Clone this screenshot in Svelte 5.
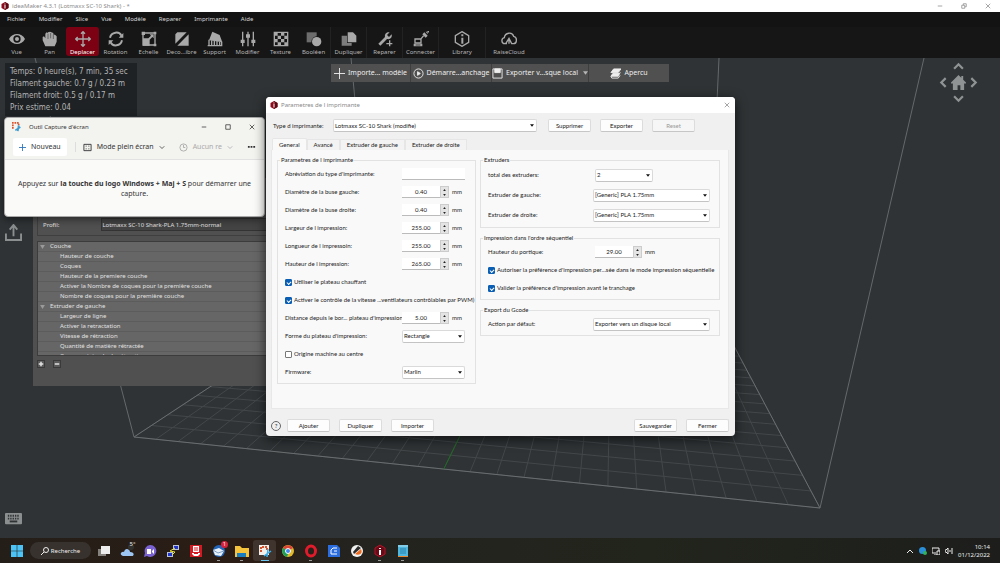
<script>
  const menus = ['Fichier', 'Modifier', 'Slice', 'Vue', 'Modèle', 'Reparer', 'Imprimante', 'Aide'];

  const tools = [
    { label: 'Vue', icon: 'eye' },
    { label: 'Pan', icon: 'hand' },
    { label: 'Deplacer', icon: 'move' },
    { label: 'Rotation', icon: 'rotate' },
    { label: 'Echelle', icon: 'scale' },
    { label: 'Deco...ibre', icon: 'cut' },
    { label: 'Support', icon: 'support' },
    { label: 'Modifier', icon: 'sliders' },
    { label: 'Texture', icon: 'texture' },
    { label: 'Booléen', icon: 'boolean' },
    { label: 'Dupliquer', icon: 'copy', size: 'mid' },
    { label: 'Reparer', icon: 'wrench', size: 'mid' },
    { label: 'Connecter', icon: 'connect', size: 'mid' },
    { label: 'Library', icon: 'library', size: 'wide' },
    { label: 'RaiseCloud', icon: 'cloud', size: 'wide' }
  ];
  let activeTool = $state('Deplacer');

  const stats = [
    'Temps: 0 heure(s), 7 min, 35 sec',
    'Filament gauche: 0.7 g / 0.23 m',
    'Filament droit: 0.5 g / 0.17 m',
    'Prix estime: 0.04'
  ];

  const settings = [
    {
      name: 'Couche',
      items: [
        'Hauteur de couche',
        'Coques',
        'Hauteur de la premiere couche',
        'Activer la Nombre de coques pour la première couche',
        'Nombre de coques pour la première couche'
      ]
    },
    {
      name: 'Extruder de gauche',
      items: [
        'Largeur de ligne',
        'Activer la retractation',
        'Vitesse de rétraction',
        'Quantité de matière rétractée',
        'Course minimale de rétraction'
      ]
    }
  ];

  const tabs = ['General', 'Avancé', 'Extruder de gauche', 'Extruder de droite'];
  let activeTab = $state('General');

  const fields = [
    { id: 'abbr', type: 'text', label: 'Abréviation du type d\'imprimante:', value: '' },
    { id: 'nozzle-left', type: 'spin', label: 'Diamètre de la buse gauche:', value: '0.40' },
    { id: 'nozzle-right', type: 'spin', label: 'Diamètre de la buse droite:', value: '0.40' },
    { id: 'width', type: 'spin', label: 'Largeur de l impression:', value: '255.00' },
    { id: 'length', type: 'spin', label: 'Longueur de l impressoin:', value: '255.00' },
    { id: 'height', type: 'spin', label: 'Hauteur de l impression:', value: '265.00' },
    { id: 'heated', type: 'check', label: 'Utiliser le plateau chauffant', value: true },
    { id: 'fan', type: 'check', label: 'Activer le contrôle de la vitesse ...ventilateurs contrôlables par PWM)', value: true },
    { id: 'edge', type: 'spin', label: 'Distance depuis le bor... plateau d\'impression:', value: '5.00' },
    { id: 'shape', type: 'select', label: 'Forme du plateau d\'impression:', value: 'Rectangle' },
    { id: 'origin', type: 'check', label: 'Origine machine au centre', value: false },
    { id: 'firmware', type: 'select', label: 'Firmware:', value: 'Marlin' }
  ];

  const extruders = [
    { id: 'total', type: 'select', label: 'total des extruders:', value: '2' },
    { id: 'ext-left', type: 'select', label: 'Extruder de gauche:', value: '[Generic] PLA 1.75mm', wide: true },
    { id: 'ext-right', type: 'select', label: 'Extruder de droite:', value: '[Generic] PLA 1.75mm', wide: true }
  ];
  const sequential = [
    { id: 'gantry', type: 'spin', label: 'Hauteur du portique:', value: '29.00' },
    { id: 'allow', type: 'check', label: 'Autoriser la préférence d\'impression per...sée dans le mode impression séquentielle', value: true },
    { id: 'validate', type: 'check', label: 'Valider la préférence d\'impression avant le tranchage', value: true }
  ];
  const gcode = [
    { id: 'action', type: 'select', label: 'Action par défaut:', value: 'Exporter vers un disque local', wide: true }
  ];

  const apps = [
    { name: 'taskview' },
    { name: 'weather' },
    { name: 'chat' },
    { name: 'putty' },
    { name: 'reader' },
    { name: 'mail', running: true },
    { name: 'files', running: true },
    { name: 'snip', running: true, active: true },
    { name: 'chrome' },
    { name: 'opera', running: true },
    { name: 'cura' },
    { name: 'prusa' },
    { name: 'ideamaker', running: true },
    { name: 'notepad', running: true }
  ];

  // Build plate corners in the scene: front left, front right, back right, back left
  const plate = [[134, 379], [820, 450], [708, 239], [372, 222]];
  const cells = 26;

  function project(u, v) {
    const [[x0, y0], [x1, y1], [x2, y2], [x3, y3]] = plate;
    const sx = x0 - x1 + x2 - x3;
    const sy = y0 - y1 + y2 - y3;
    const dx1 = x1 - x2;
    const dx2 = x3 - x2;
    const dy1 = y1 - y2;
    const dy2 = y3 - y2;
    const det = dx1 * dy2 - dx2 * dy1;
    const g = (sx * dy2 - dx2 * sy) / det;
    const h = (dx1 * sy - sx * dy1) / det;
    const w = g * u + h * v + 1;
    return [
      ((x1 - x0 + g * x1) * u + (x3 - x0 + h * x3) * v + x0) / w,
      ((y1 - y0 + g * y1) * u + (y3 - y0 + h * y3) * v + y0) / w
    ];
  }

  function line(u0, v0, u1, v1) {
    return `M${project(u0, v0).join(' ')}L${project(u1, v1).join(' ')}`;
  }

  let gridPath = '';
  for (let i = 0; i <= cells; i++) {
    gridPath += line(i / cells, 0, i / cells, 1) + line(0, i / cells, 1, i / cells);
  }
  const outline = line(0, 0, 1, 0) + line(1, 0, 1, 1) + line(1, 1, 0, 1) + line(0, 1, 0, 0);
  const axis = line(0.5, 0, 0.5, 0.25);
</script>

{#snippet logo()}
  <svg class="logo" viewBox="0 0 16 16" aria-hidden="true">
    <path d="M8 0l7 4v8l-7 4-7-4V4z" fill="#8e0a1c" />
    <path d="M8 0l7 4v8l-7 4z" fill="#5c0712" />
    <path d="M7 3h2v2H7zM7 6h2v7H7z" fill="#fff" />
  </svg>
{/snippet}

{#snippet field(f)}
  <div class="row">
    {#if f.type === 'check'}
      <label class="check">
        <input type="checkbox" bind:checked={f.value} />
        <span>{f.label}</span>
      </label>
    {:else}
      <label class="name" for={f.id}>{f.label}</label>
      <div class="control">
        {#if f.type === 'text'}
          <input id={f.id} class="text" type="text" value={f.value} />
        {:else if f.type === 'spin'}
          <input id={f.id} class="number" type="text" value={f.value} />
          <span class="steps">
            <button aria-label="Plus"><svg viewBox="0 0 4 3"><path d="M0 3l2-3 2 3z" /></svg></button>
            <button aria-label="Moins"><svg viewBox="0 0 4 3"><path d="M0 0l2 3 2-3z" /></svg></button>
          </span>
          <span class="unit">mm</span>
        {:else}
          <span class="drop" class:wide={f.wide} class:short={f.id === 'total'}>
            <select id={f.id}><option>{f.value}</option></select>
            <svg viewBox="0 0 6 4"><path d="M0 0h6L3 4z" /></svg>
          </span>
        {/if}
      </div>
    {/if}
  </div>
{/snippet}

<div class="desktop">
  <header class="titlebar">
    {@render logo()}
    <span class="title">ideaMaker 4.3.1 (Lotmaxx SC-10 Shark) - *</span>
    <div class="window-buttons">
      <button aria-label="Réduire"><svg viewBox="0 0 8 8"><path d="M1 4h6" /></svg></button>
      <button aria-label="Restaurer"><svg viewBox="0 0 8 8"><path d="M1 3h4v4H1zM3 3V1h4v4H5" /></svg></button>
      <button aria-label="Fermer"><svg viewBox="0 0 8 8"><path d="M1 1l6 6M7 1L1 7" /></svg></button>
    </div>
  </header>

  <nav class="menubar">
    {#each menus as menu}
      <button>{menu}</button>
    {/each}
  </nav>

  <div class="toolbar">
    {#each tools as tool}
      <button class="tool {tool.size ?? ''}" class:active={tool.label === activeTool} onclick={() => (activeTool = tool.label)}>
        <svg viewBox="0 0 24 24" aria-hidden="true">
          {#if tool.icon === 'eye'}
            <path class="fill" d="M0 12c5-10 19-10 24 0-5 10-19 10-24 0z" />
            <circle cx="12" cy="12" r="5.5" fill="#161616" />
            <circle class="fill" cx="12" cy="12" r="3" />
          {:else if tool.icon === 'hand'}
            <path class="fill" d="M5 23L1 14V9l2-1 2 3V4l2-2 2 1V2l3-1 2 1 3 1v2l3 1 2 2v8l-3 7z" />
            <path d="M9 4v8M13 3v8M17 5v7" stroke="#161616" stroke-width="0.7" />
          {:else if tool.icon === 'move'}
            <path class="stroke" d="M12 2v20M2 12h20M9 4l3-3 3 3M9 20l3 3 3-3M4 9l-3 3 3 3M20 9l3 3-3 3" />
          {:else if tool.icon === 'rotate'}
            <path class="stroke bold" d="M3 10c2-9 14-10 17-3M21 14c-2 9-14 10-17 3" />
            <path class="fill" d="M23 3v7h-7zM1 21v-7h7z" />
          {:else if tool.icon === 'scale'}
            <path class="stroke" d="M3 3h18v18H3z" />
            <path class="fill" d="M3 11h10v11H3zM13 5h6v6l-2-2-4 4-2-2 4-4z" />
            <path class="fill" d="M1 1h5v5H1zM19 1h4v4h-4zM19 19h4v4h-4z" />
          {:else if tool.icon === 'cut'}
            <path class="fill" d="M5 2h14L2 19V5zM22 5v17H5z" />
            <path d="M2 22L22 2" stroke="#161616" stroke-width="1" />
          {:else if tool.icon === 'support'}
            <path class="fill" d="M8 1l11 5 4 11-20-3z" />
            <path class="stroke" d="M3 13v9M7 14v8M11 15v7M15 15v7M19 16v6M22 16v6M1 22h22" />
          {:else if tool.icon === 'sliders'}
            <path class="stroke" d="M4 1v22M12 1v22M20 1v22" />
            <path class="fill" d="M1 13h6v5H1zM9 5h6v5H9zM17 13h6v5h-6z" />
          {:else if tool.icon === 'texture'}
            <path class="stroke" d="M2 2h20v20H2z" />
            <path class="fill" d="M2 2h5v5H2zM12 2h5v5h-5zM7 7h5v5H7zM17 7h5v5h-5zM2 12h5v5H2zM12 12h5v5h-5zM7 17h5v5H7zM17 17h5v5h-5z" />
          {:else if tool.icon === 'boolean'}
            <path class="fill" d="M1 2h15v15H1z" opacity="0.6" />
            <circle cx="16" cy="16" r="8" fill="#161616" />
            <circle class="fill" cx="16" cy="16" r="7" />
          {:else if tool.icon === 'copy'}
            <path class="fill" d="M1 7h8v11h7v4H1z" opacity="0.7" />
            <path class="fill" d="M10 2h8l5 5v10H10z" />
          {:else if tool.icon === 'wrench'}
            <path class="fill" d="M2 19L12 9c-1-5 3-8 7-7l-4 4 3 3 4-4c1 5-2 8-7 7L5 22z" />
            <path class="stroke" d="M19 14v9M14 19h9" />
          {:else if tool.icon === 'connect'}
            <path class="stroke" d="M3 12h9v6H3zM11 13l5-6" />
            <path class="fill" d="M1 19h13v4H1zM14 5l3-3 5 5-3 3zM19 1h3v4zM21 0h3v3z" />
            <path d="M4 21h7" stroke="#161616" />
          {:else if tool.icon === 'library'}
            <path class="stroke" d="M12 1l10 6v10l-10 6-10-6V7z" />
            <path class="fill" d="M11 5h3v3h-3zM11 10h3v9h-3z" />
          {:else}
            <path class="stroke" d="M9 19H6c-6 0-6-8-1-9 1-8 12-9 14-2 6 1 5 11 0 11h-3l-4-8-5 8M12 11v8" />
          {/if}
        </svg>
        <span>{tool.label}</span>
      </button>
    {/each}
  </div>

  <main class="scene">
    <svg class="plate" viewBox="0 0 1000 480" preserveAspectRatio="none" aria-hidden="true">
      <path d={gridPath} stroke="#43474a" />
      <path d={outline} stroke="#696d6f" />
      <path d="M35 0L134 379M351 0L372 222M719 0L708 239M924 0L820 450" stroke="#65696b" />
      <path d={axis} stroke="#1d6b22" />
    </svg>

    <div class="actions">
      <button><svg viewBox="0 0 12 12"><path d="M6 0v12M0 6h12" /></svg>Importe... modèle</button>
      <button><svg viewBox="0 0 12 12"><circle cx="6" cy="6" r="5" /><path class="solid" d="M5 4l3 2-3 2z" /></svg>Démarre...anchage</button>
      <button><svg viewBox="0 0 12 12"><path d="M1 1h10v10H1z" /><path class="solid" d="M3 1h6v4H3z" /></svg>Exporter v...sque local<svg class="caret" viewBox="0 0 6 4"><path d="M0 0h6L3 4z" /></svg></button>
      <button><svg viewBox="0 0 12 12"><path class="solid" d="M4 1h8l-3 4H1zM3 6h7l1-1-2 4H1z" /><path d="M1 9l1 2h7l2-3" /></svg>Apercu</button>
    </div>

    <div class="stats">
      {#each stats as stat}
        <p>{stat}</p>
      {/each}
    </div>

    <div class="compass">
      <button class="up" aria-label="Haut"><svg viewBox="0 0 10 10"><path d="M1 7l4-4 4 4" /></svg></button>
      <button class="left" aria-label="Gauche"><svg viewBox="0 0 10 10"><path d="M7 1L3 5l4 4" /></svg></button>
      <button class="home" aria-label="Accueil"><svg viewBox="0 0 16 16"><path d="M8 0l3 3V1h2v4l3 3v1h-2v7h-4v-5H7v5H2V9H0V8z" /></svg></button>
      <button class="right" aria-label="Droite"><svg viewBox="0 0 10 10"><path d="M3 1l4 4-4 4" /></svg></button>
      <button class="down" aria-label="Bas"><svg viewBox="0 0 10 10"><path d="M1 3l4 4 4-4" /></svg></button>
    </div>

    <button class="side share" aria-label="Envoyer">
      <svg viewBox="0 0 18 18"><path d="M1 10v7h16v-7M9 13V2M5 6l4-5 4 5" /></svg>
    </button>
    <button class="side keyboard" aria-label="Clavier">
      <svg viewBox="0 0 18 14">
        <rect x="0" y="1" width="18" height="12" rx="1" fill="#8c8f90" stroke="none" />
        <path d="M3 4h12M3 7h12" stroke="#303335" stroke-dasharray="1.5 1" />
        <path d="M5 10h8" stroke="#303335" />
      </svg>
    </button>

    <section class="profile">
      <div class="profile-row">
        <label for="profile">Profil:</label>
        <select id="profile"><option>Lotmaxx SC-10 Shark-PLA 1.75mm-normal</option></select>
      </div>
      <div class="tree">
        {#each settings as group}
          <div class="branch"><svg viewBox="0 0 6 5"><path d="M0 0h6L3 5z" /></svg>{group.name}</div>
          {#each group.items as item}
            <div class="leaf">{item}</div>
          {/each}
        {/each}
      </div>
      <div class="tree-buttons">
        <button aria-label="Ajouter"><svg viewBox="0 0 8 8"><path d="M4 1v6M1 4h6" /></svg></button>
        <button aria-label="Retirer"><svg viewBox="0 0 8 8"><path d="M1 4h6" /></svg></button>
      </div>
    </section>

    <section class="snip">
      <div class="snip-title">
        <svg class="snip-logo" viewBox="0 0 12 12"><path d="M1 8V1h7v4" fill="none" stroke="#d9532c" stroke-width="2" stroke-dasharray="2 1" /><path d="M4 10l6-4M7 11l1-7" stroke="#3d9bd0" stroke-width="2" /></svg>
        <span>Outil Capture d'écran</span>
        <div class="window-buttons">
          <button aria-label="Réduire"><svg viewBox="0 0 8 8"><path d="M1 4h6" /></svg></button>
          <button aria-label="Agrandir"><svg viewBox="0 0 8 8"><path d="M1 1h6v6H1z" /></svg></button>
          <button aria-label="Fermer"><svg viewBox="0 0 8 8"><path d="M1 1l6 6M7 1L1 7" /></svg></button>
        </div>
      </div>
      <div class="snip-tools">
        <button class="new"><svg viewBox="0 0 8 8"><path d="M4 0v8M0 4h8" /></svg>Nouveau</button>
        <button class="mode">
          <svg class="frame" viewBox="0 0 10 9"><path d="M1 1h8v7H1z" /><path d="M3 3h1M6 3h1M3 6h1M6 6h1" /></svg>
          Mode plein écran
          <svg class="chevron" viewBox="0 0 8 8"><path d="M1 3l3 3 3-3" /></svg>
        </button>
        <button class="delay">
          <svg class="frame" viewBox="0 0 10 10"><circle cx="5" cy="5" r="4" /><path d="M5 2v3h2" /></svg>
          Aucun re
          <svg class="chevron" viewBox="0 0 8 8"><path d="M1 3l3 3 3-3" /></svg>
        </button>
        <button class="more" aria-label="Plus"><svg viewBox="0 0 10 4"><path d="M1 1h2v2H1zM4 1h2v2H4zM7 1h2v2H7z" /></svg></button>
      </div>
      <p>Appuyez sur <b>la touche du logo Windows + Maj + S</b> pour démarrer une capture.</p>
    </section>

    <section class="dialog">
      <div class="dialog-title">
        {@render logo()}
        <span>Parametres de l imprimante</span>
        <button class="close" aria-label="Fermer"><svg viewBox="0 0 8 8"><path d="M1 1l6 6M7 1L1 7" /></svg></button>
      </div>
      <div class="printer">
        <label for="printer">Type d imprimante:</label>
        <span class="drop">
          <select id="printer"><option>Lotmaxx SC-10 Shark (modifie)</option></select>
          <svg viewBox="0 0 6 4"><path d="M0 0h6L3 4z" /></svg>
        </span>
        <button class="push">Supprimer</button>
        <button class="push">Exporter</button>
        <button class="push" disabled>Reset</button>
      </div>
      <div class="tabs">
        {#each tabs as tab}
          <button class:active={tab === activeTab} onclick={() => (activeTab = tab)}>{tab}</button>
        {/each}
      </div>
      <div class="pane">
        <fieldset class="general">
          <legend>Parametres de l imprimante</legend>
          {#each fields as f}{@render field(f)}{/each}
        </fieldset>
        <div class="column">
          <fieldset class="extruders">
            <legend>Extruders</legend>
            {#each extruders as f}{@render field(f)}{/each}
          </fieldset>
          <fieldset>
            <legend>Impression dans l'ordre séquentiel</legend>
            {#each sequential as f}{@render field(f)}{/each}
          </fieldset>
          <fieldset>
            <legend>Export du Gcode</legend>
            {#each gcode as f}{@render field(f)}{/each}
          </fieldset>
        </div>
      </div>
      <div class="dialog-footer">
        <button class="help" aria-label="Aide">?</button>
        <button class="push">Ajouter</button>
        <button class="push">Dupliquer</button>
        <button class="push">Importer</button>
        <span class="spacer"></span>
        <button class="push">Sauvegarder</button>
        <button class="push">Fermer</button>
      </div>
    </section>
  </main>

  <footer class="taskbar">
    <button class="start" aria-label="Démarrer">
      <svg viewBox="0 0 12 12"><path d="M0 0h5.7v5.7H0zM6.3 0H12v5.7H6.3zM0 6.3h5.7V12H0zM6.3 6.3H12V12H6.3z" fill="#4cc2f5" /></svg>
    </button>
    <button class="search">
      <svg viewBox="0 0 8 8"><circle cx="5" cy="3" r="2.5" /><path d="M3 5L0 8" /></svg>
      Recherche
    </button>
    <div class="apps">
      {#each apps as app}
        <button class="app" class:active={app.active} class:running={app.running} aria-label={app.name}>
          <svg viewBox="0 0 14 14">
            {#if app.name === 'taskview'}
              <path d="M1 5h8v7H1z" fill="#85827e" /><path d="M4 2h9v8H4z" fill="#ededed" />
            {:else if app.name === 'weather'}
              <path d="M3 12c-4-1-2-5 1-4 1-5 6-3 6 0 5 0 4 4 2 4z" fill="#9cc5f3" />
              <circle cx="11" cy="3" r="3" fill="#33312f" />
            {:else if app.name === 'chat'}
              <path d="M7 1a6 6 0 1 1-3 11l-3 1 1-4A6 6 0 0 1 7 1z" fill="#7a62d2" />
              <path d="M4 5h4v5H4zM9 7l2-2v5L9 8z" fill="#fff" />
            {:else if app.name === 'putty'}
              <path d="M7 1h6v5H7zM1 8h6v5H1z" fill="#b8c3d8" /><path d="M8 2h4v3H8zM2 9h4v3H2z" fill="#2033c8" /><path d="M9 4L4 7l5 1-3 3" fill="none" stroke="#ebe335" />
            {:else if app.name === 'reader'}
              <path d="M1 1h12v12H1z" fill="#d11a22" /><path d="M4 2h6v6H4zM3 9h2v1h4V9h2v1l-2 2H5L3 10z" fill="#fff" /><path d="M5 4h4M5 6h4" stroke="#d11a22" />
            {:else if app.name === 'mail'}
              <circle cx="7" cy="7" r="6" fill="#2465b6" /><path d="M1 6l6-2 5 3-3 5-6-1z" fill="#e8f1fa" /><path d="M1 6l5 3 6-2" fill="none" stroke="#7b9dc4" />
            {:else if app.name === 'files'}
              <path d="M0 2h5l2 2h7v9H0z" fill="#f5c33c" /><path d="M2 9h9v4H2z" fill="#197cc0" />
            {:else if app.name === 'snip'}
              <path d="M1 1h10v10H1z" fill="#f2eee9" /><path d="M3 8V3h6v3" fill="none" stroke="#d4522d" stroke-width="2" stroke-dasharray="2 1" /><path d="M6 12l7-5M9 13l1-8" stroke="#3daee8" stroke-width="1.5" />
            {:else if app.name === 'chrome'}
              <circle cx="7" cy="7" r="6" fill="#e2b92b" /><path d="M7 7L2 4a6 6 0 0 1 10 0z" fill="#db4637" /><path d="M2 4a6 6 0 0 0 4 9l2-6z" fill="#1fa05a" /><circle cx="7" cy="7" r="2.5" fill="#4587f0" stroke="#fff" />
            {:else if app.name === 'opera'}
              <ellipse cx="7" cy="7" rx="4.5" ry="5" fill="none" stroke="#e01b2b" stroke-width="3" />
            {:else if app.name === 'cura'}
              <path d="M1 1h9l3 3v9H1z" fill="#2b6cdf" /><path d="M10 4H6L4 6v4h6M10 7H7" fill="none" stroke="#fff" />
            {:else if app.name === 'prusa'}
              <circle cx="7" cy="7" r="6" fill="#f1f1f1" /><path d="M3 8L8 2l3 2-7 6z" fill="#2c2c2c" /><path d="M5 10l6-5c2 4-1 7-6 5z" fill="#ed6b21" />
            {:else if app.name === 'ideamaker'}
              <path d="M7 1l5 3v6l-5 3-5-3V4z" fill="#6b0916" stroke="#b31329" /><path d="M6 4h2v1H6zM6 6h2v5H6z" fill="#fff" />
            {:else}
              <path d="M2 1h10v12H2z" fill="#4fb6de" /><path d="M2 12h10v1H2z" fill="#e7852c" /><path d="M4 5h6M4 7h6M4 9h6" stroke="#21759c" stroke-width="0.8" /><path d="M3 1v2M5 1v2M7 1v2M9 1v2M11 1v2" stroke="#b8e3f3" />
            {/if}
          </svg>
          {#if app.name === 'weather'}<span class="temp">5°</span>{/if}
          {#if app.name === 'mail'}<span class="badge">1</span>{/if}
        </button>
      {/each}
    </div>
    <div class="tray">
      <svg viewBox="0 0 8 8"><path d="M1 6l3-3 3 3" /></svg>
      <svg viewBox="0 0 8 8"><circle cx="3.5" cy="3.5" r="3.5" fill="#2a8fd6" stroke="none" /><circle cx="6" cy="6" r="2" fill="#30b35a" stroke="none" /></svg>
      <svg viewBox="0 0 8 8"><path d="M7 4V1H0v5h4M2 8h3M5 4h3v4H5z" /></svg>
      <svg viewBox="0 0 8 8"><path d="M0 3h1l2-2v6L1 5H0zM5 3v2M7 1v6" /></svg>
      <div class="clock"><span>10:14</span><span>01/12/2022</span></div>
    </div>
  </footer>
</div>

<style>
  :global(body) {
    margin: 0;
    background: #2f3335;
  }

  .desktop {
    display: flex;
    flex-direction: column;
    min-height: 100vh;
    font-family: "Noto Sans", "Open Sans", sans-serif;
    font-size: 6px;
    line-height: 10px;
    color: #d8d8d8;
    overflow: hidden;
  }

  .desktop * {
    box-sizing: border-box;
  }

  button,
  input,
  select {
    margin: 0;
    padding: 0;
    border: 0;
    border-radius: 0;
    background: none;
    color: inherit;
    font: inherit;
    appearance: none;
  }

  p {
    margin: 0;
  }

  svg {
    display: block;
    flex: none;
    fill: none;
    stroke: currentColor;
  }

  .logo {
    width: 8px;
    height: 8px;
    stroke: none;
  }

  .titlebar {
    display: flex;
    align-items: center;
    height: 12px;
    padding: 0 8px 0 1px;
    background: #fff;
    color: #8a8a8a;
  }

  .title {
    flex: 1;
    margin-left: 3px;
  }

  .window-buttons {
    display: flex;
    gap: 16px;
  }

  .window-buttons svg {
    width: 8px;
    height: 6px;
  }

  .menubar {
    display: flex;
    gap: 13px;
    height: 15px;
    padding: 0 7px 2px;
    background: #131313;
  }

  .toolbar {
    display: flex;
    height: 31px;
    background: #161616;
  }

  .tool {
    display: flex;
    flex-direction: column;
    align-items: center;
    width: 33px;
    padding-top: 4px;
    color: #b5b5b5;
  }

  .tool.mid {
    width: 36px;
    border-left: 1px solid #222;
  }

  .tool.wide {
    width: 47px;
    border-left: 1px solid #222;
  }

  .tool svg {
    width: 16px;
    height: 16px;
    stroke: none;
  }

  .tool .fill {
    fill: #a9a9a9;
  }

  .tool .stroke {
    stroke: #a9a9a9;
    stroke-width: 2;
  }

  .tool .bold {
    stroke-width: 3;
  }

  .tool.active {
    height: 29px;
    border-radius: 3px;
    background: #7c0213;
    color: #fff;
  }

  .scene {
    position: relative;
    flex: 1;
    min-height: 480px;
    background: #2f3335;
  }

  .plate {
    position: absolute;
    width: 100%;
    height: 100%;
  }

  .actions {
    position: absolute;
    top: 6px;
    left: 50%;
    display: grid;
    grid-template-columns: 79px 81px 97px 81px;
    height: 18px;
    transform: translateX(-50%);
    background: #505050;
    color: #eee;
    font-size: 7px;
  }

  .actions button {
    display: flex;
    align-items: center;
    justify-content: center;
    gap: 3px;
    white-space: nowrap;
  }

  .actions button + button {
    border-left: 1px solid #3e3e3e;
  }

  .actions svg {
    width: 11px;
    height: 11px;
    stroke-width: 1;
  }

  .actions .solid {
    fill: currentColor;
  }

  .actions .caret {
    width: 5px;
    height: 4px;
    margin-left: 2px;
    fill: #b5b5b5;
    stroke: none;
  }

  .stats {
    position: absolute;
    top: 5px;
    left: 5px;
    width: 132px;
    padding: 3px 5px 2px;
    background: #1f2224;
    color: #b5b5b5;
    font-family: "DejaVu Sans Condensed", "DejaVu Sans", sans-serif;
    font-size: 8px;
    line-height: 12px;
    white-space: nowrap;
  }

  .compass {
    position: absolute;
    top: 2px;
    right: 21px;
    display: grid;
    grid-template: "a up b" 12px "left home right" 20px "c down d" 12px / 12px 18px 12px;
    place-items: center;
    color: #8f9394;
  }

  .compass svg {
    width: 11px;
    height: 11px;
    stroke-width: 2;
  }

  .up {
    grid-area: up;
  }

  .left {
    grid-area: left;
  }

  .home {
    grid-area: home;
  }

  .right {
    grid-area: right;
  }

  .down {
    grid-area: down;
  }

  .compass .home svg {
    width: 15px;
    height: 15px;
    fill: #8f9394;
    stroke: none;
  }

  .side {
    position: absolute;
    left: 5px;
    color: #8c8f90;
  }

  .side svg {
    width: 17px;
    stroke-width: 2;
  }

  .share {
    top: 166px;
  }

  .keyboard {
    bottom: 13px;
  }

  .profile {
    position: absolute;
    top: 120px;
    left: 33px;
    width: 300px;
    padding: 34px 4px 18px;
    background: #505050;
    color: #e2e2e2;
  }

  .profile-row {
    display: flex;
    align-items: center;
    gap: 42px;
    height: 24px;
    padding: 2px 5px 0;
    border: 1px solid #3f3f3f;
    border-top: 0;
  }

  .profile-row select {
    flex: 1;
    height: 13px;
    border: 1px solid #333;
    background: #444;
  }

  .tree {
    height: 115px;
    margin-top: 5px;
    overflow: hidden;
    border: 1px solid #3c3c3c;
    background: #666;
  }

  .branch,
  .leaf {
    height: 10px;
    border-bottom: 1px solid #5c5c5c;
    line-height: 9px;
  }

  .branch {
    display: flex;
    align-items: center;
    gap: 5px;
    padding-left: 2px;
  }

  .branch svg {
    width: 5px;
    height: 4px;
    fill: #9a9a9a;
    stroke: none;
  }

  .leaf {
    padding-left: 22px;
  }

  .tree-buttons {
    display: flex;
    gap: 8px;
    margin-top: 4px;
  }

  .tree-buttons button {
    width: 8px;
    height: 8px;
    border: 1px solid #3a3a3a;
    background: #5a5a5a;
  }

  .tree-buttons svg {
    width: 6px;
    height: 6px;
    stroke-width: 2;
  }

  .snip {
    position: absolute;
    top: 59px;
    left: 4px;
    width: 261px;
    height: 100px;
    border: 1px solid #a9a9a9;
    border-radius: 4px;
    background: #fafaf9;
    color: #333;
    font-size: 7px;
    text-align: center;
    box-shadow: 0 2px 8px #0008;
  }

  .snip-title {
    display: flex;
    align-items: center;
    height: 17px;
    padding: 0 8px 0 7px;
    border-radius: 4px 4px 0 0;
    background: #f3f3f0;
    font-size: 6px;
  }

  .snip-title span {
    flex: 1;
    margin-left: 7px;
    text-align: left;
  }

  .snip-logo {
    width: 10px;
    height: 10px;
  }

  .snip-tools {
    display: flex;
    align-items: center;
    height: 25px;
    padding: 0 8px;
    border-bottom: 1px solid #e2e2e2;
    background: #f3f3f0;
  }

  .snip-tools button {
    display: flex;
    align-items: center;
    gap: 5px;
    white-space: nowrap;
  }

  .snip-tools .new {
    height: 18px;
    padding: 0 6px;
    border-radius: 2px;
    background: #fff;
  }

  .new svg {
    width: 7px;
    height: 7px;
    color: #2a74b8;
  }

  .mode {
    margin-left: 8px;
    padding-left: 7px;
    border-left: 1px solid #ddd;
  }

  .delay {
    margin-left: 14px;
    color: #aaa;
  }

  .more {
    margin-left: auto;
  }

  .more svg {
    width: 9px;
    fill: currentColor;
    stroke: none;
  }

  .frame {
    width: 9px;
    height: 9px;
  }

  .chevron {
    width: 6px;
    height: 6px;
  }

  .snip p {
    padding: 19px 8px 0;
    line-height: 10px;
  }

  .dialog {
    position: absolute;
    top: 39px;
    left: 266px;
    width: 469px;
    border-radius: 4px;
    background: #f0f0f0;
    color: #222;
    font-family: Lato, "Liberation Sans", sans-serif;
    box-shadow: 0 3px 12px #000a;
  }

  .dialog-title {
    display: flex;
    align-items: center;
    gap: 3px;
    height: 16px;
    padding: 0 5px 0 4px;
    border-radius: 4px 4px 0 0;
    background: #fff;
    color: #888;
    font-family: "Noto Sans", "Open Sans", sans-serif;
  }

  .dialog-title span {
    flex: 1;
  }

  .close svg {
    width: 6px;
    height: 6px;
  }

  .printer {
    display: flex;
    align-items: center;
    padding: 6px 40px 6px 7px;
  }

  .printer label {
    width: 60px;
  }

  .printer .drop {
    flex: 1;
    margin-right: 2px;
  }

  .printer .push {
    margin-left: 9px;
  }

  .push {
    width: 43px;
    height: 13px;
    border: 1px solid #dcdcdc;
    border-bottom-color: #c6c6c6;
    border-radius: 2px;
    background: #fdfdfd;
    text-align: center;
  }

  .push:disabled {
    background: #f6f6f6;
    color: #999;
  }

  .drop {
    position: relative;
    display: block;
    width: 63px;
  }

  .drop.short {
    width: 58px;
  }

  .drop.wide {
    width: 117px;
  }

  .drop select {
    display: block;
    width: 100%;
    height: 13px;
    padding: 0 1px;
    border: 1px solid #dadada;
    border-bottom-color: #c4c4c4;
    border-radius: 2px;
    background: #fff;
  }

  .drop svg {
    position: absolute;
    top: 5px;
    right: 3px;
    width: 4px;
    height: 3px;
    fill: #111;
    stroke: none;
    pointer-events: none;
  }

  .tabs {
    display: flex;
    align-items: flex-end;
    padding-left: 6px;
  }

  .tabs button {
    height: 11px;
    padding: 0 6px;
    border: 1px solid #e6e6e6;
    border-bottom: 0;
    background: #f3f3f3;
  }

  .tabs .active {
    height: 12px;
    border-radius: 2px 2px 0 0;
    background: #f9f9f9;
  }

  .pane {
    display: flex;
    gap: 4px;
    min-height: 259px;
    margin: 0 6px 0 5px;
    padding: 5px 8px 5px 5px;
    border: 1px solid #e8e8e8;
    border-top: 0;
    background: #f9f9f9;
  }

  fieldset {
    min-width: 0;
    margin: 0;
    padding: 0 9px 2px 7px;
    border: 1px solid #e2e2e2;
  }

  legend {
    height: 10px;
    margin-left: -5px;
    padding: 0 1px;
  }

  .general {
    flex: none;
    align-self: flex-start;
    width: 199px;
  }

  .column {
    flex: 1;
    display: flex;
    flex-direction: column;
    gap: 5px;
    min-width: 0;
  }

  .row {
    display: flex;
    align-items: center;
    height: 18px;
    white-space: nowrap;
  }

  .extruders .row {
    height: 20px;
  }

  .name {
    width: 117px;
  }

  .column .name {
    width: 107px;
  }

  .control {
    display: flex;
    align-items: center;
  }

  .text,
  .number {
    width: 63px;
    height: 12px;
    border-bottom: 1px solid #bbb;
    background: #fff;
  }

  .number {
    width: 38px;
    text-align: center;
  }

  .steps {
    display: flex;
    flex-direction: column;
    width: 9px;
    height: 12px;
    border: 1px solid #ccc;
    background: #e4e4e4;
  }

  .steps button {
    display: flex;
    flex: 1;
    align-items: center;
    justify-content: center;
  }

  .steps svg {
    width: 3px;
    height: 2px;
    fill: #222;
    stroke: none;
  }

  .unit {
    margin-left: 3px;
  }

  .check {
    display: flex;
    align-items: center;
    gap: 2px;
  }

  .check input {
    width: 7px;
    height: 7px;
    border: 1px solid #777;
    border-radius: 1px;
    background: #fff;
  }

  .check input:checked {
    border-color: #0a5fb4;
    background: #0a5fb4;
  }

  .check input:checked::after {
    content: "";
    display: block;
    width: 3px;
    height: 2px;
    margin: 1px;
    border: solid #fff;
    border-width: 0 0 1px 1px;
    transform: rotate(-45deg);
  }

  .dialog-footer {
    display: flex;
    align-items: center;
    gap: 9px;
    padding: 10px 6px 4px 5px;
  }

  .help {
    width: 10px;
    height: 10px;
    margin-right: -3px;
    border: 1px solid #666;
    border-radius: 50%;
    line-height: 8px;
  }

  .spacer {
    flex: 1;
  }

  .taskbar {
    display: flex;
    align-items: center;
    height: 25px;
    padding: 0 10px 0 11px;
    background: linear-gradient(90deg, #241e19, #2b1d15 25%, #24231f 35%, #22251c 65%, #1d1e1c);
    color: #eee;
  }

  .start svg {
    width: 12px;
    height: 12px;
    stroke: none;
  }

  .search {
    display: flex;
    align-items: center;
    justify-content: center;
    gap: 2px;
    width: 61px;
    height: 17px;
    margin: 0 1px 0 7px;
    border-radius: 9px;
    background: #37322e;
  }

  .search svg {
    width: 8px;
    height: 8px;
  }

  .apps {
    display: flex;
    flex: 1;
  }

  .app {
    position: relative;
    display: flex;
    flex-direction: column;
    align-items: center;
    justify-content: center;
    width: 23px;
    height: 21px;
  }

  .app svg {
    width: 14px;
    height: 14px;
    stroke: none;
  }

  .app.active {
    border-radius: 3px;
    background: #40352e;
  }

  .running::after {
    content: "";
    position: absolute;
    bottom: 0;
    width: 3px;
    height: 1px;
    background: #999;
  }

  .active.running::after {
    width: 8px;
    background: #6bc5f1;
  }

  .badge,
  .temp {
    position: absolute;
    top: 1px;
    right: 2px;
    width: 7px;
    height: 7px;
    line-height: 7px;
  }

  .badge {
    border-radius: 50%;
    background: #d4213c;
  }

  .tray {
    display: flex;
    align-items: center;
    gap: 5px;
  }

  .tray svg {
    width: 8px;
    height: 8px;
  }

  .clock {
    display: flex;
    flex-direction: column;
    line-height: 8px;
    text-align: right;
  }
</style>
